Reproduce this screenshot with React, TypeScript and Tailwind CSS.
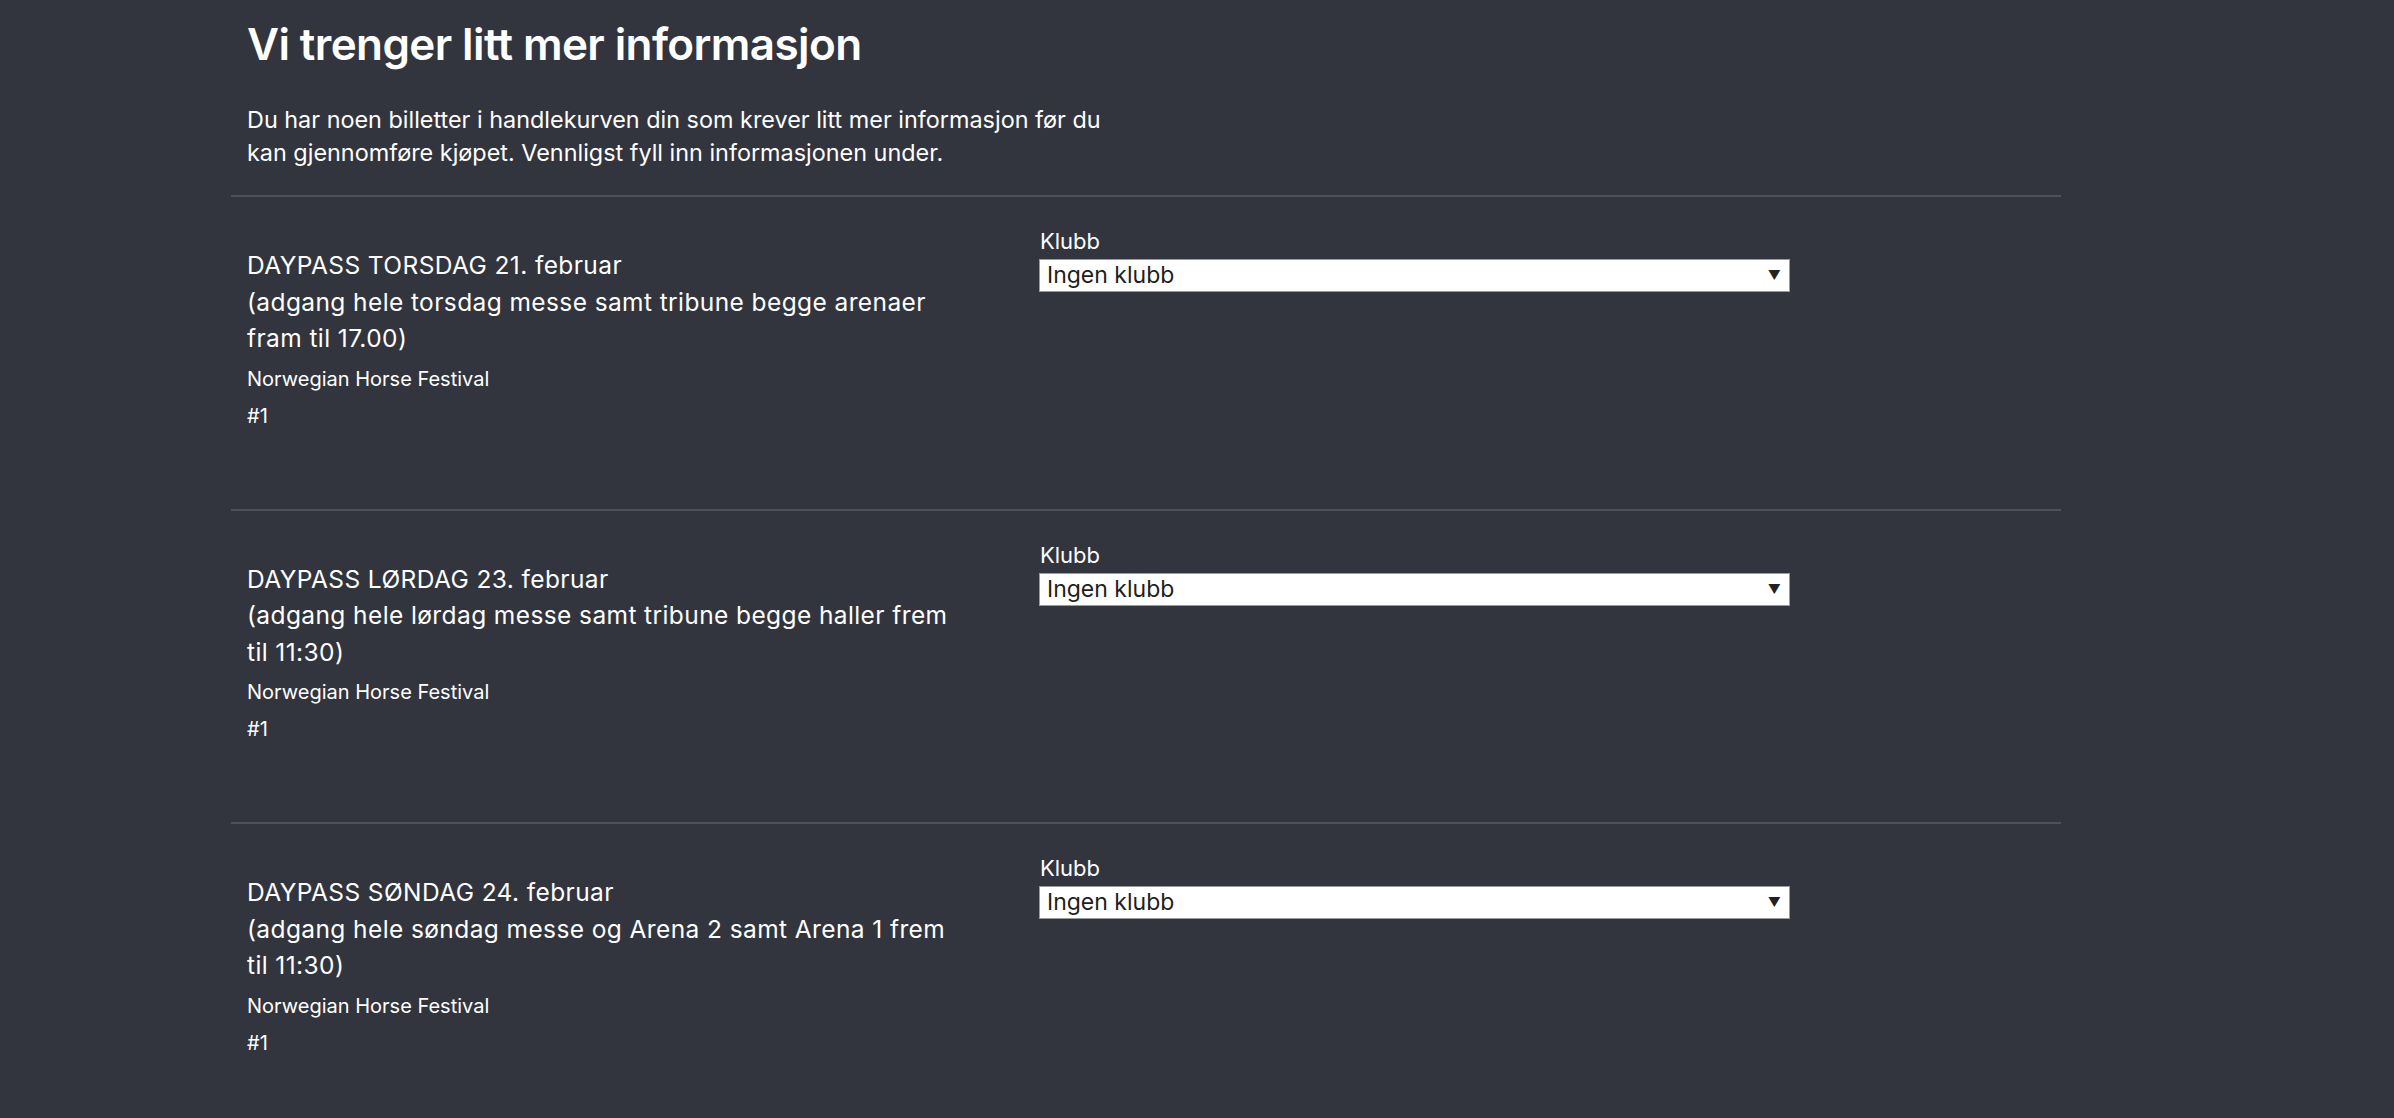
import React from 'react';

type Ticket = {
  title: string;
  description: string;
  event: string;
  number: string;
};

const tickets: Ticket[] = [
  {
    title: 'DAYPASS TORSDAG 21. februar',
    description: '(adgang hele torsdag messe samt tribune begge arenaer fram til 17.00)',
    event: 'Norwegian Horse Festival',
    number: '#1',
  },
  {
    title: 'DAYPASS LØRDAG 23. februar',
    description: '(adgang hele lørdag messe samt tribune begge haller frem til 11:30)',
    event: 'Norwegian Horse Festival',
    number: '#1',
  },
  {
    title: 'DAYPASS SØNDAG 24. februar',
    description: '(adgang hele søndag messe og Arena 2 samt Arena 1 frem til 11:30)',
    event: 'Norwegian Horse Festival',
    number: '#1',
  },
];

const font = { fontFamily: 'Inter, "Noto Sans", sans-serif' };

const TicketRow: React.FC<{ ticket: Ticket }> = ({ ticket }) => (
  <div className="flex border-t-2 border-[#4d5159]">
    <div className="w-[808px] pl-4 pt-[50px] pb-[79px]">
      <div className="w-[715px] text-[24.5px] leading-[36.5px] tracking-[0.4px]">
        <div>{ticket.title}</div>
        <div>{ticket.description}</div>
      </div>
      <div className="mt-[8px] text-[20px] leading-[28px]">{ticket.event}</div>
      <div className="mt-[9px] text-[20px] leading-[28px]">{ticket.number}</div>
    </div>
    <div className="pt-[31px]">
      <label className="block text-[22px] leading-[26px] pl-[1px]">Klubb</label>
      <div className="relative mt-[5px] w-[751px]">
        <select
          className="block w-full h-[33px] appearance-none bg-white border border-[#9b9b9b] pl-[7px] pr-8 text-[23px] leading-[31px] text-[#1e1e1e] outline-none rounded-none"
          style={font}
          defaultValue="none"
        >
          <option value="none">Ingen klubb</option>
        </select>
        <span className="pointer-events-none absolute right-[9px] top-[8px] text-[13px] leading-[16px] text-[#222]">▼</span>
      </div>
    </div>
  </div>
);

const App: React.FC = () => {
  return (
    <div className="min-h-screen w-full bg-[#32353d] text-white overflow-hidden" style={font}>
      <div className="ml-[231px] w-[1830px]">
        <div className="pl-4 pt-[16px]">
          <h1 className="text-[44px] leading-[56px] font-semibold tracking-[-0.6px]">Vi trenger litt mer informasjon</h1>
          <p className="mt-[31px] w-[880px] text-[23.4px] leading-[33px]">
            Du har noen billetter i handlekurven din som krever litt mer informasjon før du kan gjennomføre kjøpet. Vennligst fyll inn informasjonen under.
          </p>
        </div>
        <div className="mt-[26px]">
          {tickets.map((t, i) => (
            <TicketRow key={i} ticket={t} />
          ))}
        </div>
      </div>
    </div>
  );
};

export default App;
